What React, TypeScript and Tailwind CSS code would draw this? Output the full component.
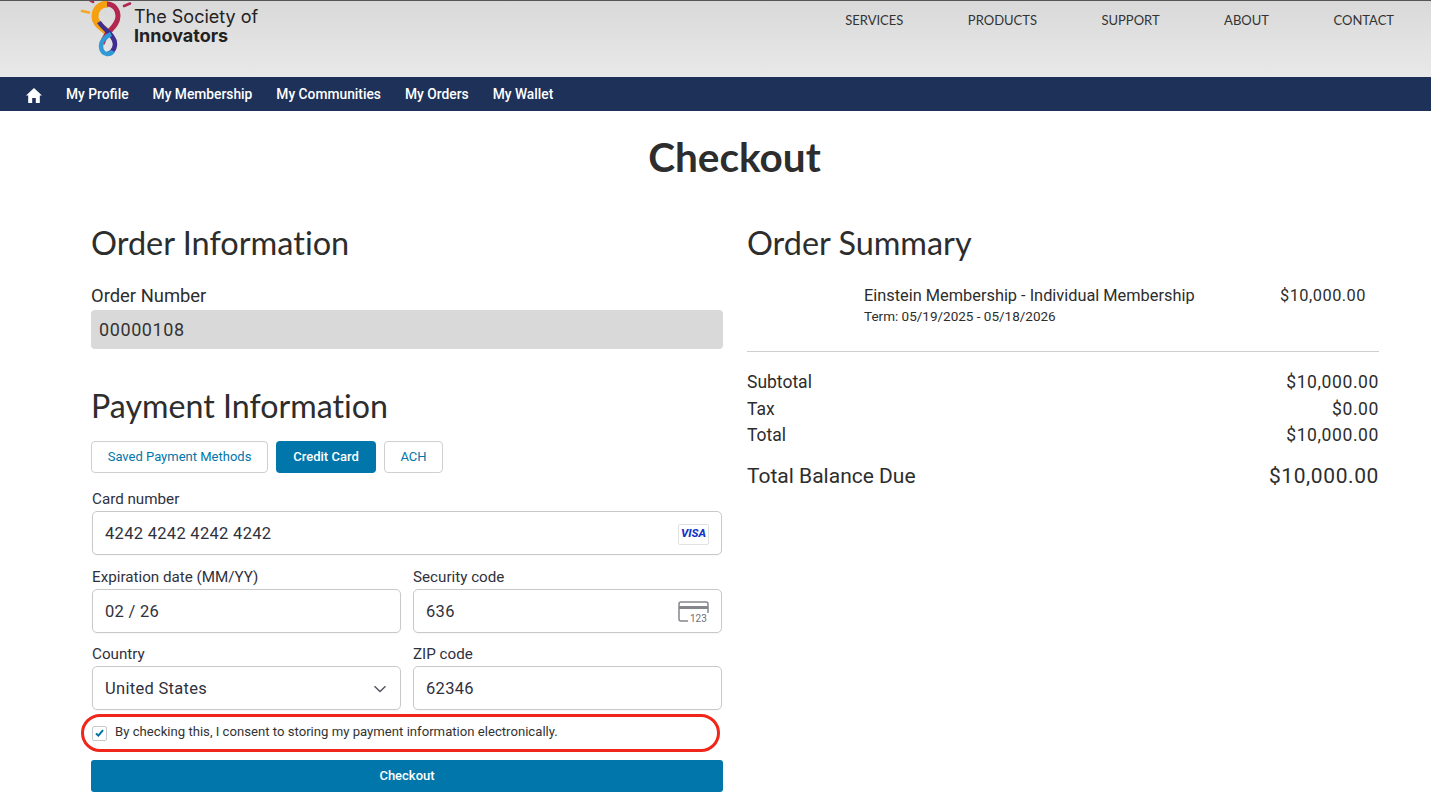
import React from 'react'

const plex = "font-['Roboto','Liberation_Sans',sans-serif]"
const lato = "font-['Lato','Liberation_Sans',sans-serif] [font-variant-ligatures:none]"

const Logo = () => (
    <svg width="54" height="56" viewBox="0 0 54 56" className="block" fill="none">
        <path d="M2 10 L9 11.5" stroke="#f5a623" strokeWidth="2.6" strokeLinecap="round" />
        <path d="M8 -2 L13 1" stroke="#b5234f" strokeWidth="2.6" strokeLinecap="round" />
        <path d="M44 5 L50 2.5" stroke="#b5234f" strokeWidth="2.6" strokeLinecap="round" />
        <path d="M28 3 C19 3 15 9 15 16 C15 23 22 26 27 31" stroke="#f5a011" strokeWidth="7" />
        <path d="M27 3 C34 3 38 9 38 15 C38 23 31 28 27 33 C25 36 23 40 22 43" stroke="#b3264f" strokeWidth="5" />
        <path d="M19 21 C23 28 35 34 35 43 C35 49 30 53 27 53" stroke="#3d2f8f" strokeWidth="4.5" />
        <path d="M31 33 C25 36 21 40 21 45 C21 50 24 53 27 53 C30 53 32 52 33 50" stroke="#2f9ad6" strokeWidth="4.5" />
    </svg>
)

const HomeIcon = () => (
    <svg width="16" height="15" viewBox="0 0 16 15" fill="#fff">
        <path d="M8 0 L16 7.4 L13.8 7.4 L13.8 15 L9.8 15 L9.8 10 L6.2 10 L6.2 15 L2.2 15 L2.2 7.4 L0 7.4 Z" />
    </svg>
)

const Field = ({ label, value, children }: { label: string; value: string; children?: React.ReactNode }) => (
    <div className="flex-1 min-w-0">
        <div className="text-[15.2px] leading-[16px] text-[#30313d] mb-[4px]">{label}</div>
        <div className="h-[44px] rounded-[5px] border border-[#c9c9cc] bg-white flex items-center justify-between pl-[12px] pr-[12px] pt-[2px] text-[16.5px] text-[#30313d] shadow-[0_1px_2px_rgba(0,0,0,0.04)]">
            <span className="tracking-[0.3px]">{value}</span>
            {children}
        </div>
    </div>
)

const SummaryRow = ({ label, value }: { label: string; value: string }) => (
    <div className="flex justify-between text-[17.5px] leading-[26.5px] text-[#2d2d2d]">
        <span>{label}</span>
        <span className="tracking-[0.6px]">{value}</span>
    </div>
)

export default function App() {
    const topLinks = ['SERVICES', 'PRODUCTS', 'SUPPORT', 'ABOUT', 'CONTACT']
    const navLinks = ['My Profile', 'My Membership', 'My Communities', 'My Orders', 'My Wallet']

    return (
        <div className={`${plex} h-[803px] overflow-hidden bg-white relative`}>
            {/* HEADER */}
            <header className="h-[77px] border-t border-[#555] bg-gradient-to-b from-[#d9d9d9] to-[#e9e9e9] flex justify-between pl-[80px] pr-[37px]">
                <div className="flex items-start">
                    <Logo />
                    <div className="pt-[7px] text-[#222] font-['Inter',sans-serif]">
                        <div className="text-[18px] leading-[18px]">The Society of</div>
                        <div className="text-[18px] leading-[19px] font-bold">Innovators</div>
                    </div>
                </div>
                <nav className={`${lato} flex gap-[64.5px] pt-[11px] text-[13px] leading-[16px] text-[#333]`}>
                    {topLinks.map((link) => (
                        <span key={link}>{link}</span>
                    ))}
                </nav>
            </header>

            {/* NAV */}
            <div className="h-[34px] bg-[#1e3158] flex items-center pl-[26px] text-white text-[13.8px] font-medium">
                <span className="mr-[24px] mt-[2px]"><HomeIcon /></span>
                <div className="flex gap-[24px]">
                    {navLinks.map((link) => (
                        <span key={link}>{link}</span>
                    ))}
                </div>
            </div>

            <h1 className={`${lato} text-[40.5px] leading-[48px] font-bold text-[#2d2d2d] text-center pt-[22px] pl-[38px]`}>
                Checkout
            </h1>

            <main className="flex gap-[24px] pl-[91px] pr-[52px] pt-[42px]">
                {/* LEFT */}
                <section className="w-[632px]">
                    <h2 className={`${lato} text-[32.5px] leading-[40px] text-[#2d2d2d]`}>Order Information</h2>
                    <div className="text-[18.4px] leading-[22px] text-[#2d2d2d] mt-[22px]">Order Number</div>
                    <div className="h-[39px] mt-[3px] rounded-[4px] bg-[#d9d9d9] flex items-center pl-[8px] text-[18px] text-[#333] tracking-[0.6px]">
                        00000108
                    </div>

                    <h2 className={`${lato} text-[32.2px] leading-[40px] text-[#2d2d2d] mt-[37px]`}>Payment Information</h2>

                    <div className="flex gap-[8px] mt-[15px] text-[13px]">
                        <button className="h-[32px] w-[177px] rounded-[4px] border border-[#cfcfcf] text-[#0176aa]">Saved Payment Methods</button>
                        <button className="h-[32px] w-[100px] rounded-[4px] bg-[#0176aa] text-white font-medium">Credit Card</button>
                        <button className="h-[32px] w-[59px] rounded-[4px] border border-[#cfcfcf] text-[#0176aa]">ACH</button>
                    </div>

                    <div className="flex flex-col gap-[13px] mt-[18px] px-[1px]">
                        <div className="mb-[1px]">
                            <Field label="Card number" value="4242 4242 4242 4242">
                                <span className="h-[21px] w-[31px] rounded-[2px] border border-[#e2e2e2] flex items-center justify-center text-[11.5px] leading-none font-extrabold italic text-[#1434c4]">
                                    VISA
                                </span>
                            </Field>
                        </div>
                        <div className="flex gap-[12px]">
                            <Field label="Expiration date (MM/YY)" value="02 / 26" />
                            <Field label="Security code" value="636">
                                <svg width="31" height="22" viewBox="0 0 31 22" fill="none">
                                    <path d="M10 20 H3 Q1 20 1 18 V3 Q1 1 3 1 H28 Q30 1 30 3 V12" stroke="#85868c" strokeWidth="1.5" />
                                    <rect x="1" y="5" width="29" height="3" fill="#85868c" />
                                    <text x="12" y="21" fontSize="10" fill="#6d6e78" fontFamily="Roboto, sans-serif">123</text>
                                </svg>
                            </Field>
                        </div>
                        <div className="flex gap-[12px]">
                            <Field label="Country" value="United States">
                                <svg width="14" height="8" viewBox="0 0 14 8" fill="none" className="mr-[1px]">
                                    <path d="M1.5 1.2 L7 6.5 L12.5 1.2" stroke="#55565f" strokeWidth="1.5" />
                                </svg>
                            </Field>
                            <Field label="ZIP code" value="62346" />
                        </div>
                    </div>

                    <div className="flex items-center h-[16px] mt-[15px] pl-[1px] text-[13.15px] text-[#333]">
                        <span className="h-[15px] w-[15px] rounded-[2px] border border-[#c9c9cc] flex items-center justify-center mr-[8px]">
                            <svg width="9" height="8" viewBox="0 0 9 8" fill="none">
                                <path d="M1 4.5 L3.4 6.6 L8 1.2" stroke="#0176aa" strokeWidth="2" />
                            </svg>
                        </span>
                        <span className="mb-[3px]">By checking this, I consent to storing my payment information electronically.</span>
                    </div>

                    <button className="h-[32px] w-full mt-[19px] rounded-[3px] bg-[#0176aa] text-white text-[13px] font-medium">
                        Checkout
                    </button>
                </section>

                {/* RIGHT */}
                <section className="w-[632px]">
                    <h2 className={`${lato} text-[32.4px] leading-[40px] text-[#2d2d2d]`}>Order Summary</h2>
                    <div className="flex justify-between pl-[117px] pr-[13px] mt-[22px] h-[62px] text-[#2d2d2d]">
                        <div>
                            <div className="text-[16.35px] leading-[22px]">Einstein Membership - Individual Membership</div>
                            <div className="text-[13.5px] leading-[18px]">Term: 05/19/2025 - 05/18/2026</div>
                        </div>
                        <div className="text-[16.35px] leading-[22px] tracking-[0.5px]">$10,000.00</div>
                    </div>
                    <div className="border-t border-[#cfcfcf] pt-[17px] mt-[4px]">
                        <SummaryRow label="Subtotal" value="$10,000.00" />
                        <SummaryRow label="Tax" value="$0.00" />
                        <SummaryRow label="Total" value="$10,000.00" />
                        <div className="flex justify-between text-[21px] leading-[28px] text-[#2d2d2d] mt-[13px]">
                            <span>Total Balance Due</span>
                            <span className="tracking-[0.6px]">$10,000.00</span>
                        </div>
                    </div>
                </section>
            </main>

            {/* red annotation around the consent row */}
            <div className="absolute left-[81px] top-[714px] h-[38px] w-[639px] rounded-[19px] border-[3px] border-[#f0261a]" />
        </div>
    )
}
